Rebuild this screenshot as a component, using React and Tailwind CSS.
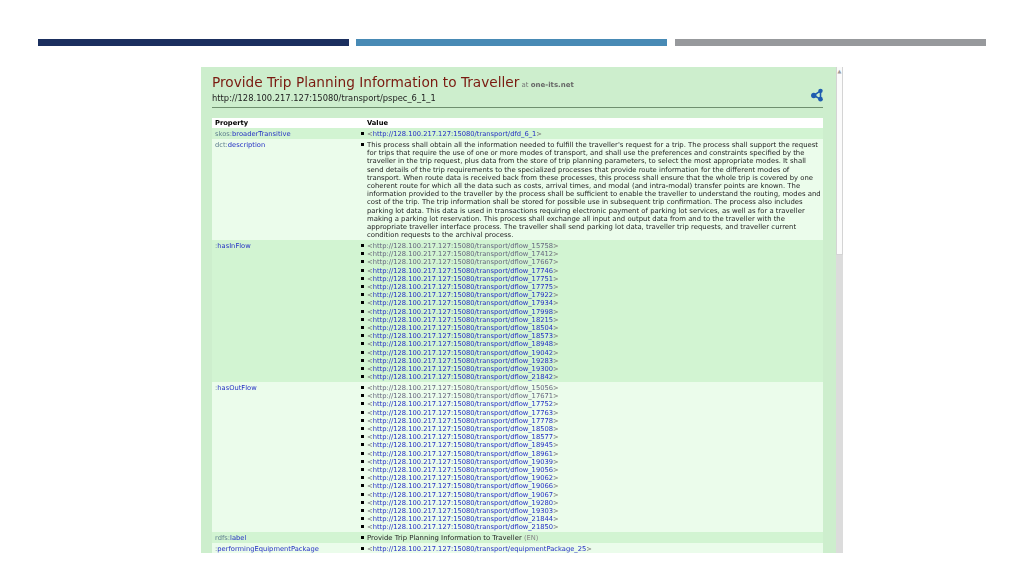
const FONT = "font-['DejaVu_Sans',sans-serif]";

const DESCRIPTION = [
  "This process shall obtain all the information needed to fulfill the traveller's request for a trip. The process shall support the request",
  'for trips that require the use of one or more modes of transport, and shall use the preferences and constraints specified by the',
  'traveller in the trip request, plus data from the store of trip planning parameters, to select the most appropriate modes. It shall',
  'send details of the trip requirements to the specialized processes that provide route information for the different modes of',
  'transport. When route data is received back from these processes, this process shall ensure that the whole trip is covered by one',
  'coherent route for which all the data such as costs, arrival times, and modal (and intra-modal) transfer points are known. The',
  'information provided to the traveller by the process shall be sufficient to enable the traveller to understand the routing, modes and',
  'cost of the trip. The trip information shall be stored for possible use in subsequent trip confirmation. The process also includes',
  'parking lot data. This data is used in transactions requiring electronic payment of parking lot services, as well as for a traveller',
  'making a parking lot reservation. This process shall exchange all input and output data from and to the traveller with the',
  'appropriate traveller interface process. The traveller shall send parking lot data, traveller trip requests, and traveller current',
  'condition requests to the archival process.',
];

const IN_FLOW = ['15758', '17412', '17667', '17746', '17751', '17775', '17922', '17934', '17998', '18215', '18504', '18573', '18948', '19042', '19283', '19300', '21842'];
const OUT_FLOW = ['15056', '17671', '17752', '17763', '17778', '18508', '18577', '18945', '18961', '19039', '19056', '19062', '19066', '19067', '19280', '19303', '21844', '21850'];
const VISITED = ['15758', '17412', '17667', '15056', '17671'];

const Link = ({ path, visited }) => (
  <span className="text-[#777777]">
    &lt;<span className={visited ? 'text-[#66667f]' : 'text-[#2430c4]'}>http://128.100.217.127:15080/transport/{path}</span>&gt;
  </span>
);

const Item = ({ children }) => (
  <li className="relative">
    <span className="absolute left-0 top-[2px] -ml-[6px] h-[3px] w-[3px] bg-black" />
    {children}
  </li>
);

const Row = ({ prefix, name, light, className = '', children }) => (
  <div className={`flex ${light ? 'bg-[#ebfceb]' : 'bg-[#d2f4d2]'} ${className}`}>
    <div className="w-[149px] shrink-0 pl-[3px] pt-[2px]">
      <span className="text-[#5f7f8f]">{prefix}</span>
      <span className="text-[#2430c4]">{name}</span>
    </div>
    <ul className="ml-[6px] flex-1 pb-[0.5px] pt-[2px]">{children}</ul>
  </div>
);

const ShareIcon = () => (
  <svg width="12" height="14" viewBox="0 0 13 15" className="mb-[3px]">
    <path d="M10.3 3 L3 8 L10.3 12 Z" fill="none" stroke="#1f5cb0" strokeWidth="1.7" />
    <circle cx="10.3" cy="3" r="2.4" fill="#1f5cb0" />
    <circle cx="3" cy="8" r="2.9" fill="#1f5cb0" />
    <circle cx="10.3" cy="12" r="2.5" fill="#1f5cb0" />
  </svg>
);

export default function App() {
  return (
    <div className={`${FONT} h-[576px] w-[1024px] overflow-hidden bg-white pt-[39px]`}>
      {/* Slide header bars */}
      <div className="flex h-[7px] pl-[38px]">
        <div className="w-[311px] bg-[#1b2f5f]" />
        <div className="ml-[7px] w-[311px] bg-[#488ab5]" />
        <div className="ml-[8px] w-[311px] bg-[#97999c]" />
      </div>

      {/* Screenshot of the RDF page */}
      <div className="ml-[201px] mt-[21px] flex h-[486px] w-[642px] overflow-hidden">
        <div className="w-[635px] bg-[#cdeecd] pl-[11px] pr-[13px] pt-[7px] blur-[0.35px]">
          <div className="flex items-end justify-between border-b border-[#6f8f6f] pb-[2px]">
            <div>
              <div className="whitespace-nowrap text-[13.7px] leading-[17px] text-[#7a1a10]">
                Provide Trip Planning Information to Traveller
                <span className="ml-[2px] text-[7px] leading-none text-[#777777]">
                  at <span className="font-bold text-[#666666]">one-its.net</span>
                </span>
              </div>
              <div className="whitespace-nowrap text-[8.35px] leading-[14px] text-[#222222]">
                http://128.100.217.127:15080/transport/pspec_6_1_1
              </div>
            </div>
            <ShareIcon />
          </div>

          <div className="mt-[10px] text-[6.73px] leading-[8.2px] text-[#222222]">
            <div className="flex h-[10px] bg-white font-bold leading-[10px] text-black">
              <div className="w-[155px] pl-[3px]">Property</div>
              <div>Value</div>
            </div>

            <Row prefix="skos:" name="broaderTransitive" className="h-[11px]">
              <Item><Link path="dfd_6_1" /></Item>
            </Row>

            <Row prefix="dct:" name="description" light>
              <Item>
                {DESCRIPTION.map((line) => (
                  <div key={line} className="whitespace-nowrap text-[6.88px]">{line}</div>
                ))}
              </Item>
            </Row>

            <Row prefix=":" name="hasInFlow">
              {IN_FLOW.map((id) => (
                <Item key={id}><Link path={`dflow_${id}`} visited={VISITED.includes(id)} /></Item>
              ))}
            </Row>

            <Row prefix=":" name="hasOutFlow" light>
              {OUT_FLOW.map((id) => (
                <Item key={id}><Link path={`dflow_${id}`} visited={VISITED.includes(id)} /></Item>
              ))}
            </Row>

            <Row prefix="rdfs:" name="label">
              <Item>
                <span className="text-[6.9px]">Provide Trip Planning Information to Traveller</span>{' '}
                <span className="text-[#888888]">(EN)</span>
              </Item>
            </Row>

            <Row prefix=":" name="performingEquipmentPackage" light>
              <Item><Link path="equipmentPackage_25" /></Item>
            </Row>
          </div>
        </div>

        {/* Scrollbar */}
        <div className="flex w-[7px] flex-col bg-[#dcdcdc]">
          <div className="h-[188px] rounded-b-[1px] border-x border-b border-[#d4d4d4] bg-[#fbfbfb] text-center text-[5px] leading-[8px] text-[#999999]">▲</div>
        </div>
      </div>
    </div>
  );
}
